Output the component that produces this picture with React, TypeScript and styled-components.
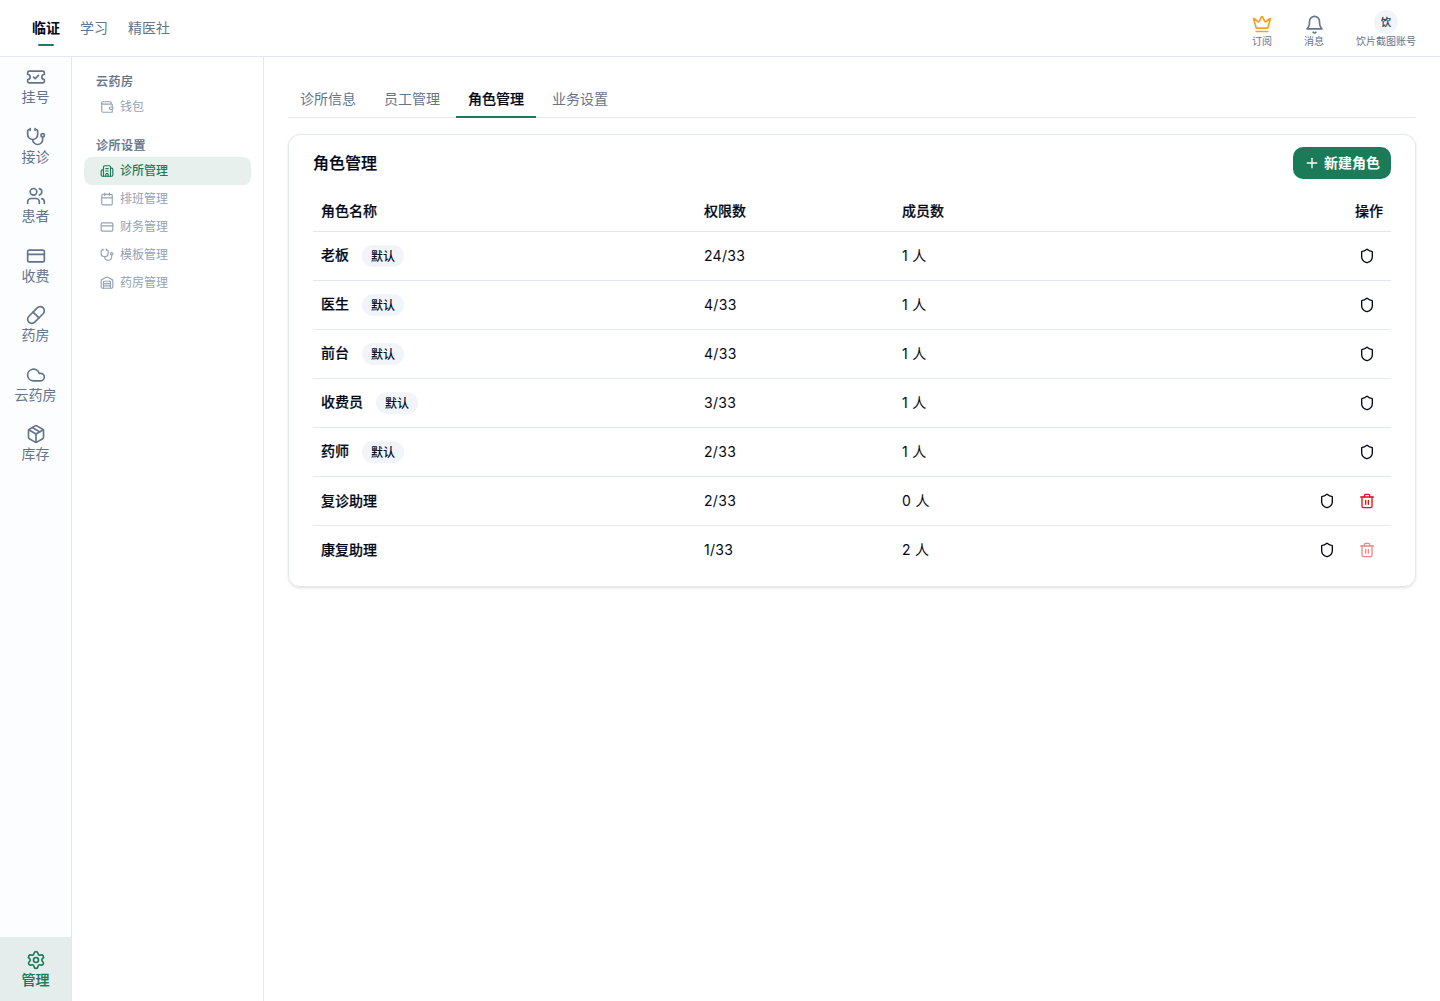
import React from 'react';
import styled, { createGlobalStyle, css } from 'styled-components';
import {
  TicketCheck, Stethoscope, Users, CreditCard, Pill, Cloud, Package, Settings,
  Crown, Wallet, Calendar, Warehouse, Shield, Plus, Building2,
} from 'lucide-react';

const color = {
  ink: '#020817',
  muted: '#64748b',
  faint: '#94a3b8',
  line: '#e2e8f0',
  green: '#1b7b58',
  tint: '#e8f0ed',
  danger: '#e60f0f',
};

const semibold = css`
  font-weight: 500;
  -webkit-text-stroke: 0.2px currentColor;
`;

const GlobalStyle = createGlobalStyle`
  * { box-sizing: border-box; }
  body {
    margin: 0;
    background: #fff;
    color: ${color.ink};
    font-family: Inter, "Noto Sans CJK SC", sans-serif;
    font-size: 14px;
    line-height: 20px;
  }
  svg { display: block; flex: none; }
  button { font: inherit; border: 0; background: none; padding: 0; color: inherit; }
`;

const Page = styled.div`
  height: 1001px;
  display: flex;
  flex-direction: column;
  overflow: hidden;
`;

const Header = styled.header`
  flex: none;
  height: 57px;
  padding: 0 24px 0 32px;
  display: flex;
  justify-content: space-between;
  border-bottom: 1px solid ${color.line};
`;

const TopNav = styled.nav`
  display: flex;
  gap: 20px;
`;

const TopLink = styled.a<{ $active?: boolean }>`
  display: flex;
  flex-direction: column;
  align-items: center;
  padding-top: 18px;
  color: ${p => (p.$active ? color.ink : color.muted)};
  font-weight: ${p => (p.$active ? 700 : 400)};
  ${p => p.$active && css`
    &::after {
      content: '';
      width: 16px;
      height: 2px;
      margin-top: 6px;
      border-radius: 2px;
      background: ${color.green};
    }
  `}
`;

const Tools = styled.div`
  display: flex;
  gap: 32px;
  padding-top: 10px;
`;

const Tool = styled.div<{ $tint?: string }>`
  display: flex;
  flex-direction: column;
  align-items: center;
  color: ${color.muted};
  font-size: 10px;
  line-height: 15px;
  svg { margin-top: 4px; color: ${p => p.$tint ?? color.muted}; }
`;

const Avatar = styled.span`
  width: 24px;
  height: 24px;
  border-radius: 50%;
  background: #f1f5f9;
  color: #334155;
  line-height: 24px;
  text-align: center;
  ${semibold}
`;

const Body = styled.div`
  flex: 1;
  display: flex;
  min-height: 0;
`;

const Rail = styled.nav`
  width: 72px;
  display: flex;
  flex-direction: column;
  background: #fbfdff;
  border-right: 1px solid ${color.line};
`;

const RailItem = styled.a<{ $active?: boolean }>`
  display: flex;
  flex-direction: column;
  align-items: center;
  padding: 10px 0;
  line-height: 19.5px;
  color: ${color.muted};
  ${p => p.$active && css`
    margin-top: auto;
    padding: 13px 0 11.5px;
    background: #e5edec;
    color: ${color.green};
    ${semibold}
  `}
`;

const Side = styled.aside`
  width: 192px;
  padding: 12px;
  border-right: 1px solid ${color.line};
  font-size: 12px;
`;

const SideGroup = styled.section`
  margin-bottom: 12px;
`;

const SideTitle = styled.h2`
  margin: 0;
  padding: 1px 0 0 12px;
  height: 24px;
  font-size: 12px;
  line-height: 23px;
  letter-spacing: 0.5px;
  color: ${color.muted};
  ${semibold}
`;

const SideLink = styled.a<{ $active?: boolean }>`
  display: flex;
  align-items: center;
  gap: 6px;
  height: 28px;
  padding-left: 16px;
  border-radius: 8px;
  color: ${p => (p.$active ? color.green : color.faint)};
  background: ${p => (p.$active ? color.tint : 'transparent')};
  font-weight: ${p => (p.$active ? 500 : 400)};
`;

const Main = styled.main`
  flex: 1;
  padding: 24px;
`;

const Tabs = styled.div`
  display: flex;
  gap: 4px;
  height: 37px;
  border-bottom: 1px solid ${color.line};
`;

const Tab = styled.button<{ $active?: boolean }>`
  height: 37px;
  padding: 0 12px 1px;
  color: ${color.muted};
  ${p => p.$active && css`
    color: ${color.ink};
    box-shadow: inset 0 -2px ${color.green};
    ${semibold}
  `}
`;

const Card = styled.section`
  margin-top: 16px;
  padding: 12px 24px;
  border: 1px solid ${color.line};
  border-radius: 12px;
  box-shadow: 0 1px 3px rgba(0, 0, 0, 0.1), 0 1px 2px -1px rgba(0, 0, 0, 0.1);
`;

const CardHead = styled.div`
  display: flex;
  align-items: center;
  justify-content: space-between;
  height: 32px;
  margin-bottom: 12px;
`;

const CardTitle = styled.h1`
  margin: 0;
  font-size: 16px;
  line-height: 24px;
  ${semibold}
`;

const Primary = styled.button`
  display: flex;
  align-items: center;
  justify-content: center;
  gap: 4px;
  width: 98px;
  height: 32px;
  border-radius: 10px;
  background: ${color.green};
  color: #fff;
  font-weight: 700;
`;

const Row = styled.div<{ $head?: boolean }>`
  display: grid;
  grid-template-columns: 383px 198px 1fr auto;
  align-items: center;
  height: ${p => (p.$head ? 41 : 49)}px;
  padding: 0 8px;
  border-bottom: 1px solid ${color.line};
  ${p => p.$head && semibold}
  &:last-child {
    height: 48px;
    border-bottom: 0;
  }
`;

const Name = styled.div<{ $tagged: boolean }>`
  display: flex;
  align-items: ${p => (p.$tagged ? 'flex-start' : 'center')};
  gap: 13px;
  ${semibold}
`;

const Figure = styled.span`
  letter-spacing: 0.3px;
`;

const Badge = styled.span`
  height: 22px;
  padding: 1px 9px 0;
  border-radius: 11px;
  background: #f1f5f9;
  font-size: 12px;
  font-weight: 500;
  line-height: 21px;
  -webkit-text-stroke: 0;
`;

const Actions = styled.div`
  display: flex;
  justify-content: flex-end;
  gap: 8px;
`;

const IconButton = styled.button<{ $danger?: boolean }>`
  display: grid;
  place-items: center;
  width: 32px;
  height: 32px;
  color: ${p => (p.$danger ? color.danger : color.ink)};
  &:disabled { opacity: 0.5; }
`;

type IconProps = { size?: number; strokeWidth?: number };

const outline = ({ size = 16, strokeWidth = 2 }: IconProps) => ({
  width: size,
  height: size,
  viewBox: '0 0 24 24',
  fill: 'none',
  stroke: 'currentColor',
  strokeWidth,
  strokeLinecap: 'round' as const,
  strokeLinejoin: 'round' as const,
});

const BellIcon = (props: IconProps) => (
  <svg {...outline(props)}>
    <g transform="translate(0.6 0.8)">
      <path d="M6 8a6 6 0 0 1 12 0c0 7 3 9 3 9H3s3-2 3-9" />
      <path d="M10.3 21a1.94 1.94 0 0 0 3.4 0" />
    </g>
  </svg>
);

const TrashIcon = (props: IconProps) => (
  <svg {...outline(props)}>
    <path d="M2.5 6h19" />
    <path d="M19.5 6v14a2 2 0 0 1-2 2h-11a2 2 0 0 1-2-2V6" />
    <path d="M8 6V4a2 2 0 0 1 2-2h4a2 2 0 0 1 2 2v2" />
    <path d="M10 11v6M14 11v6" />
  </svg>
);

const rail = [
  { label: '挂号', Icon: TicketCheck },
  { label: '接诊', Icon: Stethoscope },
  { label: '患者', Icon: Users },
  { label: '收费', Icon: CreditCard },
  { label: '药房', Icon: Pill },
  { label: '云药房', Icon: Cloud },
  { label: '库存', Icon: Package },
];

type SideItem = { label: string; Icon: React.ComponentType<IconProps>; active?: boolean };

const side: { title: string; items: SideItem[] }[] = [
  { title: '云药房', items: [{ label: '钱包', Icon: Wallet }] },
  {
    title: '诊所设置',
    items: [
      { label: '诊所管理', Icon: Building2, active: true },
      { label: '排班管理', Icon: Calendar },
      { label: '财务管理', Icon: CreditCard },
      { label: '模板管理', Icon: Stethoscope },
      { label: '药房管理', Icon: Warehouse },
    ],
  },
];

const roles = [
  { name: '老板', preset: true, perms: 24, members: 1 },
  { name: '医生', preset: true, perms: 4, members: 1 },
  { name: '前台', preset: true, perms: 4, members: 1 },
  { name: '收费员', preset: true, perms: 3, members: 1 },
  { name: '药师', preset: true, perms: 2, members: 1 },
  { name: '复诊助理', preset: false, perms: 2, members: 0 },
  { name: '康复助理', preset: false, perms: 1, members: 2 },
];

export default function App() {
  return (
    <Page>
      <GlobalStyle />
      <Header>
        <TopNav>
          <TopLink $active>临证</TopLink>
          <TopLink>学习</TopLink>
          <TopLink>精医社</TopLink>
        </TopNav>
        <Tools>
          <Tool $tint="#f9a01b"><Crown size={20} />订阅</Tool>
          <Tool><BellIcon size={20} />消息</Tool>
          <Tool><Avatar>饮</Avatar>饮片截图账号</Tool>
        </Tools>
      </Header>
      <Body>
        <Rail>
          {rail.map(({ label, Icon }) => (
            <RailItem key={label}><Icon size={20} />{label}</RailItem>
          ))}
          <RailItem $active><Settings size={20} />管理</RailItem>
        </Rail>
        <Side>
          {side.map(group => (
            <SideGroup key={group.title}>
              <SideTitle>{group.title}</SideTitle>
              {group.items.map(({ label, Icon, active }) => (
                <SideLink key={label} $active={active}><Icon size={14} />{label}</SideLink>
              ))}
            </SideGroup>
          ))}
        </Side>
        <Main>
          <Tabs>
            <Tab>诊所信息</Tab>
            <Tab>员工管理</Tab>
            <Tab $active>角色管理</Tab>
            <Tab>业务设置</Tab>
          </Tabs>
          <Card>
            <CardHead>
              <CardTitle>角色管理</CardTitle>
              <Primary><Plus size={16} />新建角色</Primary>
            </CardHead>
            <div>
              <Row $head>
                <span>角色名称</span>
                <span>权限数</span>
                <span>成员数</span>
                <span>操作</span>
              </Row>
              {roles.map(role => (
                <Row key={role.name}>
                  <Name $tagged={role.preset}>
                    <span>{role.name}</span>
                    {role.preset && <Badge>默认</Badge>}
                  </Name>
                  <Figure>{role.perms}/33</Figure>
                  <Figure>{role.members} 人</Figure>
                  <Actions>
                    <IconButton><Shield size={16} /></IconButton>
                    {!role.preset && (
                      <IconButton $danger disabled={role.members > 0}><TrashIcon size={16} /></IconButton>
                    )}
                  </Actions>
                </Row>
              ))}
            </div>
          </Card>
        </Main>
      </Body>
    </Page>
  );
}
